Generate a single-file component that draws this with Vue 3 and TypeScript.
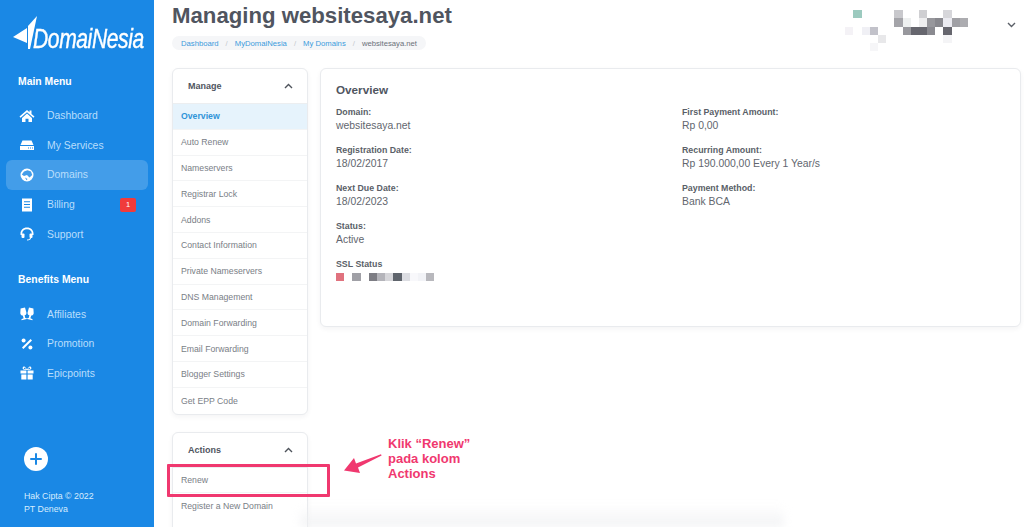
<script setup lang="ts">
interface MenuItem {
  label: string
  icon: string
  active?: boolean
  badge?: string
}

interface Cell {
  col: number
  row: number
  color: string
}

const mainMenu: MenuItem[] = [
  { label: 'Dashboard', icon: 'home' },
  { label: 'My Services', icon: 'server' },
  { label: 'Domains', icon: 'globe', active: true },
  { label: 'Billing', icon: 'bill', badge: '1' },
  { label: 'Support', icon: 'headset' },
]
const benefitsMenu: MenuItem[] = [
  { label: 'Affiliates', icon: 'cheers' },
  { label: 'Promotion', icon: 'percent' },
  { label: 'Epicpoints', icon: 'gift' },
]

const manageLinks = [
  'Overview',
  'Auto Renew',
  'Nameservers',
  'Registrar Lock',
  'Addons',
  'Contact Information',
  'Private Nameservers',
  'DNS Management',
  'Domain Forwarding',
  'Email Forwarding',
  'Blogger Settings',
  'Get EPP Code',
]
const actionLinks = ['Renew', 'Register a New Domain']

const leftFields = [
  { label: 'Domain:', value: 'websitesaya.net' },
  { label: 'Registration Date:', value: '18/02/2017' },
  { label: 'Next Due Date:', value: '18/02/2023' },
  { label: 'Status:', value: 'Active' },
]
const rightFields = [
  { label: 'First Payment Amount:', value: 'Rp 0,00' },
  { label: 'Recurring Amount:', value: 'Rp 190.000,00 Every 1 Year/s' },
  { label: 'Payment Method:', value: 'Bank BCA' },
]

// blurred account name, top right
const accountCells: Cell[] = [
  { col: 1, row: 1, color: '#9ccabf' },
  { col: 6, row: 1, color: '#c8c8cc' },
  { col: 9, row: 1, color: '#cfcfd2' },
  { col: 12, row: 1, color: '#d6d6da' },
  { col: 6, row: 2, color: '#a4a4a9' },
  { col: 7, row: 2, color: '#eef0f0' },
  { col: 9, row: 2, color: '#eeeeef' },
  { col: 10, row: 2, color: '#97979c' },
  { col: 11, row: 2, color: '#88888e' },
  { col: 12, row: 2, color: '#eaeaf0' },
  { col: 13, row: 2, color: '#a0a0a5' },
  { col: 14, row: 2, color: '#acacb0' },
  { col: 0, row: 3, color: '#f4f2f6' },
  { col: 2, row: 3, color: '#f0f0f5' },
  { col: 3, row: 3, color: '#c2c2ca' },
  { col: 7, row: 3, color: '#98989d' },
  { col: 8, row: 3, color: '#66666e' },
  { col: 9, row: 3, color: '#66666e' },
  { col: 10, row: 3, color: '#8a8a90' },
  { col: 12, row: 3, color: '#66666e' },
  { col: 4, row: 4, color: '#e8e8ea' },
  { col: 12, row: 4, color: '#f4f4f6' },
  { col: 3, row: 5, color: '#f6f6f8' },
]

const sslCells = [
  '#e0727e',
  'transparent',
  '#a0a0a6',
  'transparent',
  '#7d7d84',
  '#b4b4ba',
  '#d6d6da',
  '#5f646c',
  '#dcdde2',
  '#f8f8fb',
  '#f2f3f7',
  '#b8b8bd',
]
</script>

<template>
  <div class="page">
    <aside class="sidebar">
      <div class="logo">
        <svg class="logo-mark" width="26" height="34" viewBox="0 0 26 34">
          <path d="M0 21 L14 12 L14 27 Z" fill="#fff" />
          <path d="M15 10 L24 0 L17 33 L15 33 Z" fill="#fff" />
        </svg>
        <span class="logo-text">DomaiNesia</span>
      </div>

      <div class="menu-title">Main Menu</div>
      <nav class="menu">
        <div v-for="item in mainMenu" :key="item.label" class="menu-item" :class="{ active: item.active }">
          <svg class="menu-icon" width="16" height="16" viewBox="0 0 16 16" fill="#fff">
            <template v-if="item.icon === 'home'">
              <path d="M8 2 L0.5 8.6 L1.6 9.8 L8 4.2 L14.4 9.8 L15.5 8.6 L12.5 6 V2.5 H10.5 V4.2 Z" />
              <path d="M3 10 L8 5.6 L13 10 V14 H9.5 V10.8 H6.5 V14 H3 Z" />
            </template>
            <template v-else-if="item.icon === 'server'">
              <path d="M3.5 3.5 H12.5 L14.5 8 H1.5 Z" />
              <path d="M1 9 H15 V13 H1 Z M9 10.6 V11.6 H10 V10.6 Z M11 10.6 V11.6 H12 V10.6 Z M13 10.6 V11.6 H14 V10.6 Z" fill-rule="evenodd" />
            </template>
            <template v-else-if="item.icon === 'globe'">
              <path d="M8 1.5 A6.5 6.5 0 1 0 8 14.5 A6.5 6.5 0 1 0 8 1.5 Z M8.5 3.2 L12 4.6 L13.2 8 L10.5 10.5 L8 8 L5 9 L2.8 7.5 L5 4.5 Z M6 10.5 L8.5 12 L7.5 13.2 Z" fill-rule="evenodd" />
            </template>
            <template v-else-if="item.icon === 'bill'">
              <path d="M3 1.5 H13 V14.5 H3 Z M5 4.2 V5.2 H11 V4.2 Z M5 7 V8 H11 V7 Z M5 9.8 V10.8 H11 V9.8 Z" fill-rule="evenodd" />
            </template>
            <template v-else-if="item.icon === 'headset'">
              <path d="M8 1.5 C4 1.5 1.5 4.2 1.5 7.5 V9 L3.2 9 V7.5 C3.2 5 5 3.2 8 3.2 C11 3.2 12.8 5 12.8 7.5 V9 L14.5 9 V7.5 C14.5 4.2 12 1.5 8 1.5 Z" />
              <rect x="2.5" y="7.5" width="3" height="4.5" rx="1" />
              <rect x="10.5" y="7.5" width="3" height="4.5" rx="1" />
              <path d="M12 12 C12 13.5 10.5 14.5 8 14.5 V13.5 C10 13.5 11 12.8 11 12 Z" />
            </template>
          </svg>
          <span class="menu-label">{{ item.label }}</span>
          <span v-if="item.badge" class="badge">{{ item.badge }}</span>
        </div>
      </nav>

      <div class="menu-title benefits">Benefits Menu</div>
      <nav class="menu">
        <div v-for="item in benefitsMenu" :key="item.label" class="menu-item">
          <svg class="menu-icon" width="16" height="16" viewBox="0 0 16 16" fill="#fff">
            <template v-if="item.icon === 'cheers'">
              <path d="M1.6 2.6 L6 1.6 L7.4 6.4 C7.7 8 6.7 9 5.6 9.3 L6.3 12 L7.6 12 L7.8 13 L2.6 14.2 L2.4 13.2 L4.6 12.3 L3.8 9.6 C2.6 9.6 1.5 8.8 1.3 7.2 Z" />
              <path d="M14.4 2.6 L10 1.6 L8.6 6.4 C8.3 8 9.3 9 10.4 9.3 L9.7 12 L8.4 12 L8.2 13 L13.4 14.2 L13.6 13.2 L11.4 12.3 L12.2 9.6 C13.4 9.6 14.5 8.8 14.7 7.2 Z" />
            </template>
            <template v-else-if="item.icon === 'percent'">
              <path d="M11.6 3 L13 4.4 L4.4 13 L3 11.6 Z" />
              <circle cx="4.6" cy="4.6" r="2" />
              <circle cx="11.4" cy="11.4" r="2" />
            </template>
            <template v-else-if="item.icon === 'gift'">
              <path d="M1.5 5.5 H7.4 V8.5 H1.5 Z M8.6 5.5 H14.5 V8.5 H8.6 Z M2.3 9.4 H7.4 V14.5 H2.3 Z M8.6 9.4 H13.7 V14.5 H8.6 Z" />
              <path d="M8 5 C6.5 5 3.6 5 3.6 3.2 C3.6 1.8 5 1.2 6 1.9 C7 2.6 8 4 8 5 C8 4 9 2.6 10 1.9 C11 1.2 12.4 1.8 12.4 3.2 C12.4 5 9.5 5 8 5 Z M7 4.2 C6.6 3.4 5.6 2.6 5 2.9 C4.5 3.4 5 4.2 7 4.2 Z M9 4.2 C11 4.2 11.5 3.4 11 2.9 C10.4 2.6 9.4 3.4 9 4.2 Z" fill-rule="evenodd" />
            </template>
          </svg>
          <span class="menu-label">{{ item.label }}</span>
        </div>
      </nav>

      <div class="side-foot">
        <button class="add-btn" type="button">
          <svg width="12" height="12" viewBox="0 0 12 12">
            <path d="M6 1 V11 M1 6 H11" stroke="#1a88e5" stroke-width="2" stroke-linecap="round" />
          </svg>
        </button>
        <div class="copyright">Hak Cipta © 2022<br />PT Deneva</div>
      </div>
    </aside>

    <main class="content">
      <header class="topbar">
        <div>
          <h1 class="title">Managing websitesaya.net</h1>
          <div class="crumbs">
            <a>Dashboard</a><i>/</i><a>MyDomaiNesia</a><i>/</i><a>My Domains</a><i>/</i><span>websitesaya.net</span>
          </div>
        </div>
        <div class="account">
          <div class="mosaic">
            <span
              v-for="cell in accountCells"
              :key="`${cell.col}-${cell.row}`"
              :style="{ gridColumn: cell.col + 1, gridRow: cell.row + 1, background: cell.color }"
            ></span>
          </div>
          <svg class="account-caret" width="9" height="6" viewBox="0 0 9 6">
            <path d="M1 1 L4.5 4.5 L8 1" fill="none" stroke="#5b6068" stroke-width="1.4" />
          </svg>
        </div>
      </header>

      <div class="columns">
        <div class="side-cards">
          <section class="card panel">
            <div class="panel-head">
              <span>Manage</span>
              <svg width="9" height="6" viewBox="0 0 9 6">
                <path d="M1 5 L4.5 1.5 L8 5" fill="none" stroke="#4e535b" stroke-width="1.4" />
              </svg>
            </div>
            <a v-for="(link, i) in manageLinks" :key="link" class="panel-link" :class="{ current: i === 0 }">{{ link }}</a>
          </section>

          <section class="card panel actions">
            <div class="panel-head">
              <span>Actions</span>
              <svg width="9" height="6" viewBox="0 0 9 6">
                <path d="M1 5 L4.5 1.5 L8 5" fill="none" stroke="#4e535b" stroke-width="1.4" />
              </svg>
            </div>
            <a v-for="link in actionLinks" :key="link" class="panel-link">{{ link }}</a>
          </section>
        </div>

        <section class="card overview">
          <h2>Overview</h2>
          <div class="overview-grid">
            <div>
              <div v-for="f in leftFields" :key="f.label" class="field">
                <div class="field-label">{{ f.label }}</div>
                <div class="field-value">{{ f.value }}</div>
              </div>
              <div class="field">
                <div class="field-label">SSL Status</div>
                <div class="ssl">
                  <span v-for="(c, i) in sslCells" :key="i" :style="{ background: c }"></span>
                </div>
              </div>
            </div>
            <div>
              <div v-for="f in rightFields" :key="f.label" class="field">
                <div class="field-label">{{ f.label }}</div>
                <div class="field-value">{{ f.value }}</div>
              </div>
            </div>
          </div>
        </section>
      </div>
    </main>

    <!-- annotation drawn over the screenshot -->
    <div class="note-box"></div>
    <svg class="note-arrow" width="40" height="22" viewBox="0 0 40 22">
      <path d="M37 1.2 L12 10.5 L10 5 L0 17.5 L16 20 L14 14.5 L37.6 2.6 Z" fill="#f0386f" />
    </svg>
    <div class="note-text">Klik “Renew”<br />pada kolom<br />Actions</div>
    <div class="bottom-fade"></div>
  </div>
</template>

<style scoped>
.page {
  position: relative;
  display: flex;
  width: 1024px;
  height: 527px;
  overflow: hidden;
  background: #fff;
  font-family: 'Liberation Sans', Arial, sans-serif;
}
.sidebar {
  display: flex;
  flex-direction: column;
  flex: 0 0 154px;
  min-width: 0;
  width: 154px;
  height: 527px;
  box-sizing: border-box;
  overflow: hidden;
  background: #1a88e5;
  color: #fff;
}
.logo {
  display: flex;
  align-items: flex-start;
  height: 50px;
  padding: 16px 0 0 13px;
}
.logo-mark {
  flex: none;
}
.logo-text {
  flex: none;
  margin: 9px 0 0 -6px;
  font-size: 27px;
  font-style: italic;
  letter-spacing: -0.5px;
  line-height: 28px;
  -webkit-text-stroke: 0.4px #fff;
  transform: scaleX(0.78);
  transform-origin: left center;
  white-space: nowrap;
}
.menu-title {
  margin: 9px 0 12px 18px;
  font-size: 10.4px;
  font-weight: 700;
  line-height: 14px;
}
.menu-title.benefits {
  margin-top: 24.5px;
  margin-bottom: 12px;
}
.menu {
  display: flex;
  flex-direction: column;
  margin: 0 6px;
}
.menu-item {
  display: flex;
  align-items: center;
  height: 29.6px;
  padding-left: 13px;
  border-radius: 6px;
  color: #b9defc;
  font-size: 10.4px;
}
.menu-item.active {
  background: rgba(255, 255, 255, 0.18);
}
.menu-icon {
  flex: none;
  margin-right: 12px;
}
.menu-label {
  flex: 1;
}
.badge {
  width: 16px;
  height: 14px;
  margin-right: 12px;
  border-radius: 2px;
  background: #f03b3b;
  color: #fff;
  font-size: 7.5px;
  line-height: 14px;
  text-align: center;
}
.side-foot {
  margin-top: auto;
  padding: 0 0 11px 24px;
}
.add-btn {
  display: flex;
  align-items: center;
  justify-content: center;
  width: 24px;
  height: 24px;
  margin-bottom: 19px;
  padding: 0;
  border: 0;
  border-radius: 50%;
  background: #fff;
}
.copyright {
  color: #d7ecfe;
  font-size: 8.8px;
  line-height: 13px;
}
.content {
  flex: 1;
  min-width: 0;
  padding: 0 3px 0 18px;
}
.topbar {
  display: flex;
  justify-content: space-between;
  height: 68px;
}
.title {
  margin: 1px 0 6px;
  color: #50555f;
  font-size: 22.2px;
  font-weight: 700;
  line-height: 29px;
}
.crumbs {
  display: flex;
  align-items: center;
  width: fit-content;
  height: 14px;
  padding: 0 9px;
  border-radius: 7px;
  background: #f5f6f8;
  color: #6b7078;
  font-size: 7.7px;
}
.crumbs a {
  color: #3b9bdc;
}
.crumbs i {
  margin: 0 7px;
  color: #c4c8cd;
  font-style: normal;
}
.account {
  display: flex;
  align-items: flex-start;
}
.mosaic {
  display: grid;
  grid-template-columns: repeat(15, 8.2px);
  grid-template-rows: repeat(6, 8.2px);
  margin: 2px 39px 0 0;
}
.account-caret {
  margin: 22px 5px 0 0;
}
.columns {
  display: flex;
  gap: 12px;
  align-items: flex-start;
}
.card {
  box-sizing: border-box;
  border: 1px solid #e9ebee;
  border-radius: 6px;
  background: #fff;
  box-shadow: 0 2px 5px rgba(30, 40, 60, 0.05);
}
.side-cards {
  display: flex;
  flex-direction: column;
  flex: 0 0 136px;
  gap: 17px;
}
.panel {
  overflow: hidden;
}
.panel.actions {
  height: 130px;
}
.panel-head {
  display: flex;
  align-items: center;
  justify-content: space-between;
  height: 34px;
  padding: 0 14px 0 15px;
  border-bottom: 1px solid #eceef0;
  color: #50555f;
  font-size: 9px;
  font-weight: 700;
}
.panel-link {
  display: flex;
  align-items: center;
  box-sizing: border-box;
  height: 25.8px;
  padding-left: 8px;
  border-bottom: 1px solid #f3f4f5;
  color: #797e86;
  font-size: 8.7px;
}
.panel-link:last-child {
  border-bottom: 0;
}
.panel-link.current {
  background: #e6f3fc;
  color: #2f94d8;
  font-weight: 700;
}
.overview {
  flex: 1;
  height: 259px;
  padding: 13px 15px;
}
.overview h2 {
  margin: 0 0 9px;
  color: #50555f;
  font-size: 11.7px;
  font-weight: 700;
  line-height: 15px;
}
.overview-grid {
  display: grid;
  grid-template-columns: 346px 1fr;
}
.field {
  height: 38.1px;
}
.field-label {
  color: #5a5f68;
  font-size: 8.8px;
  font-weight: 700;
  line-height: 12px;
}
.field-value {
  margin-top: 1px;
  color: #62666e;
  font-size: 10.4px;
  line-height: 14px;
}
.ssl {
  display: flex;
  margin-top: 3px;
}
.ssl span {
  width: 8.2px;
  height: 8px;
}
.note-box {
  position: absolute;
  left: 167px;
  top: 464px;
  width: 163px;
  height: 33px;
  box-sizing: border-box;
  border: 3px solid #f0386f;
  border-radius: 1px;
}
.note-arrow {
  position: absolute;
  left: 344px;
  top: 453px;
}
.note-text {
  position: absolute;
  left: 388px;
  top: 436px;
  color: #f0386f;
  font-size: 13px;
  font-weight: 700;
  line-height: 15px;
}
.bottom-fade {
  position: absolute;
  left: 300px;
  right: 240px;
  bottom: 0;
  height: 22px;
  background: linear-gradient(to bottom, rgba(240, 241, 243, 0), rgba(238, 239, 241, 0.8));
  filter: blur(4px);
}
</style>
